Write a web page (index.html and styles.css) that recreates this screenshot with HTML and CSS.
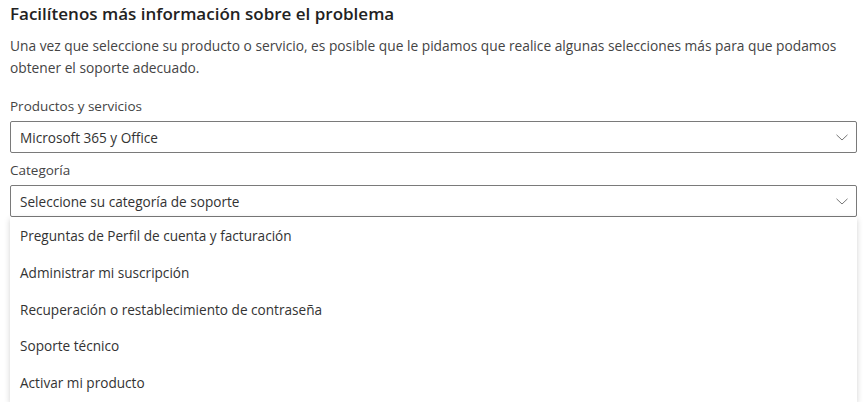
FILE: index.html
```html
<!DOCTYPE html>
<html lang="es">
<head>
<meta charset="utf-8">
<link rel="stylesheet" href="styles.css">
</head>
<body>
<main class="form">
  <h2 class="title">Facilítenos más información sobre el problema</h2>
  <p class="intro">Una vez que seleccione su producto o servicio, es posible que le pidamos que realice algunas selecciones más para que podamos obtener el soporte adecuado.</p>

  <label class="label">Productos y servicios</label>
  <div class="select">
    <span>Microsoft 365 y Office</span>
    <svg class="chev" width="12" height="7" viewBox="0 0 12 7"><path d="M0.5 0.8 L6 6 L11.5 0.8" fill="none" stroke="#777" stroke-width="1"/></svg>
  </div>

  <label class="label label-2">Categoría</label>
  <div class="combo">
    <div class="select">
      <span>Seleccione su categoría de soporte</span>
      <svg class="chev" width="12" height="7" viewBox="0 0 12 7"><path d="M0.5 0.8 L6 6 L11.5 0.8" fill="none" stroke="#777" stroke-width="1"/></svg>
    </div>
    <ul class="menu">
      <li>Preguntas de Perfil de cuenta y facturación</li>
      <li>Administrar mi suscripción</li>
      <li>Recuperación o restablecimiento de contraseña</li>
      <li>Soporte técnico</li>
      <li>Activar mi producto</li>
    </ul>
  </div>
</main>
</body>
</html>
```
FILE: styles.css
```css
* { box-sizing: border-box; }
html, body { margin: 0; padding: 0; background: #fff; }
body {
  font-family: "Open Sans", "Noto Sans", sans-serif;
  color: #333;
}
.form {
  width: 865px;
  padding: 2px 8px 0 10px;
  display: flex;
  flex-direction: column;
}
.title {
  margin: 0;
  font-size: 17px;
  line-height: 24px;
  font-weight: 600;
  color: #222;
}
.intro {
  margin: 9px 0 0;
  font-size: 13.75px;
  line-height: 22px;
  color: #444;
}
.label {
  margin-top: 17px;
  font-size: 13.5px;
  line-height: 20px;
  color: #444;
}
.label-2 { margin-top: 7px; }
.select {
  margin-top: 5px;
  height: 32px;
  border: 1px solid #7a7a7a;
  border-radius: 2px;
  display: flex;
  align-items: center;
  justify-content: space-between;
  padding: 0 8px 0 9px;
  font-size: 13.6px;
  color: #333;
}
.combo { position: relative; }
.menu {
  list-style: none;
  margin: 0;
  padding: 1px 0 0;
  background: #fff;
  box-shadow: 0 2px 6px rgba(0,0,0,0.18);
}
.menu li {
  height: 36.8px;
  line-height: 36.8px;
  padding-left: 10px;
  font-size: 13.6px;
  color: #333;
}
```
